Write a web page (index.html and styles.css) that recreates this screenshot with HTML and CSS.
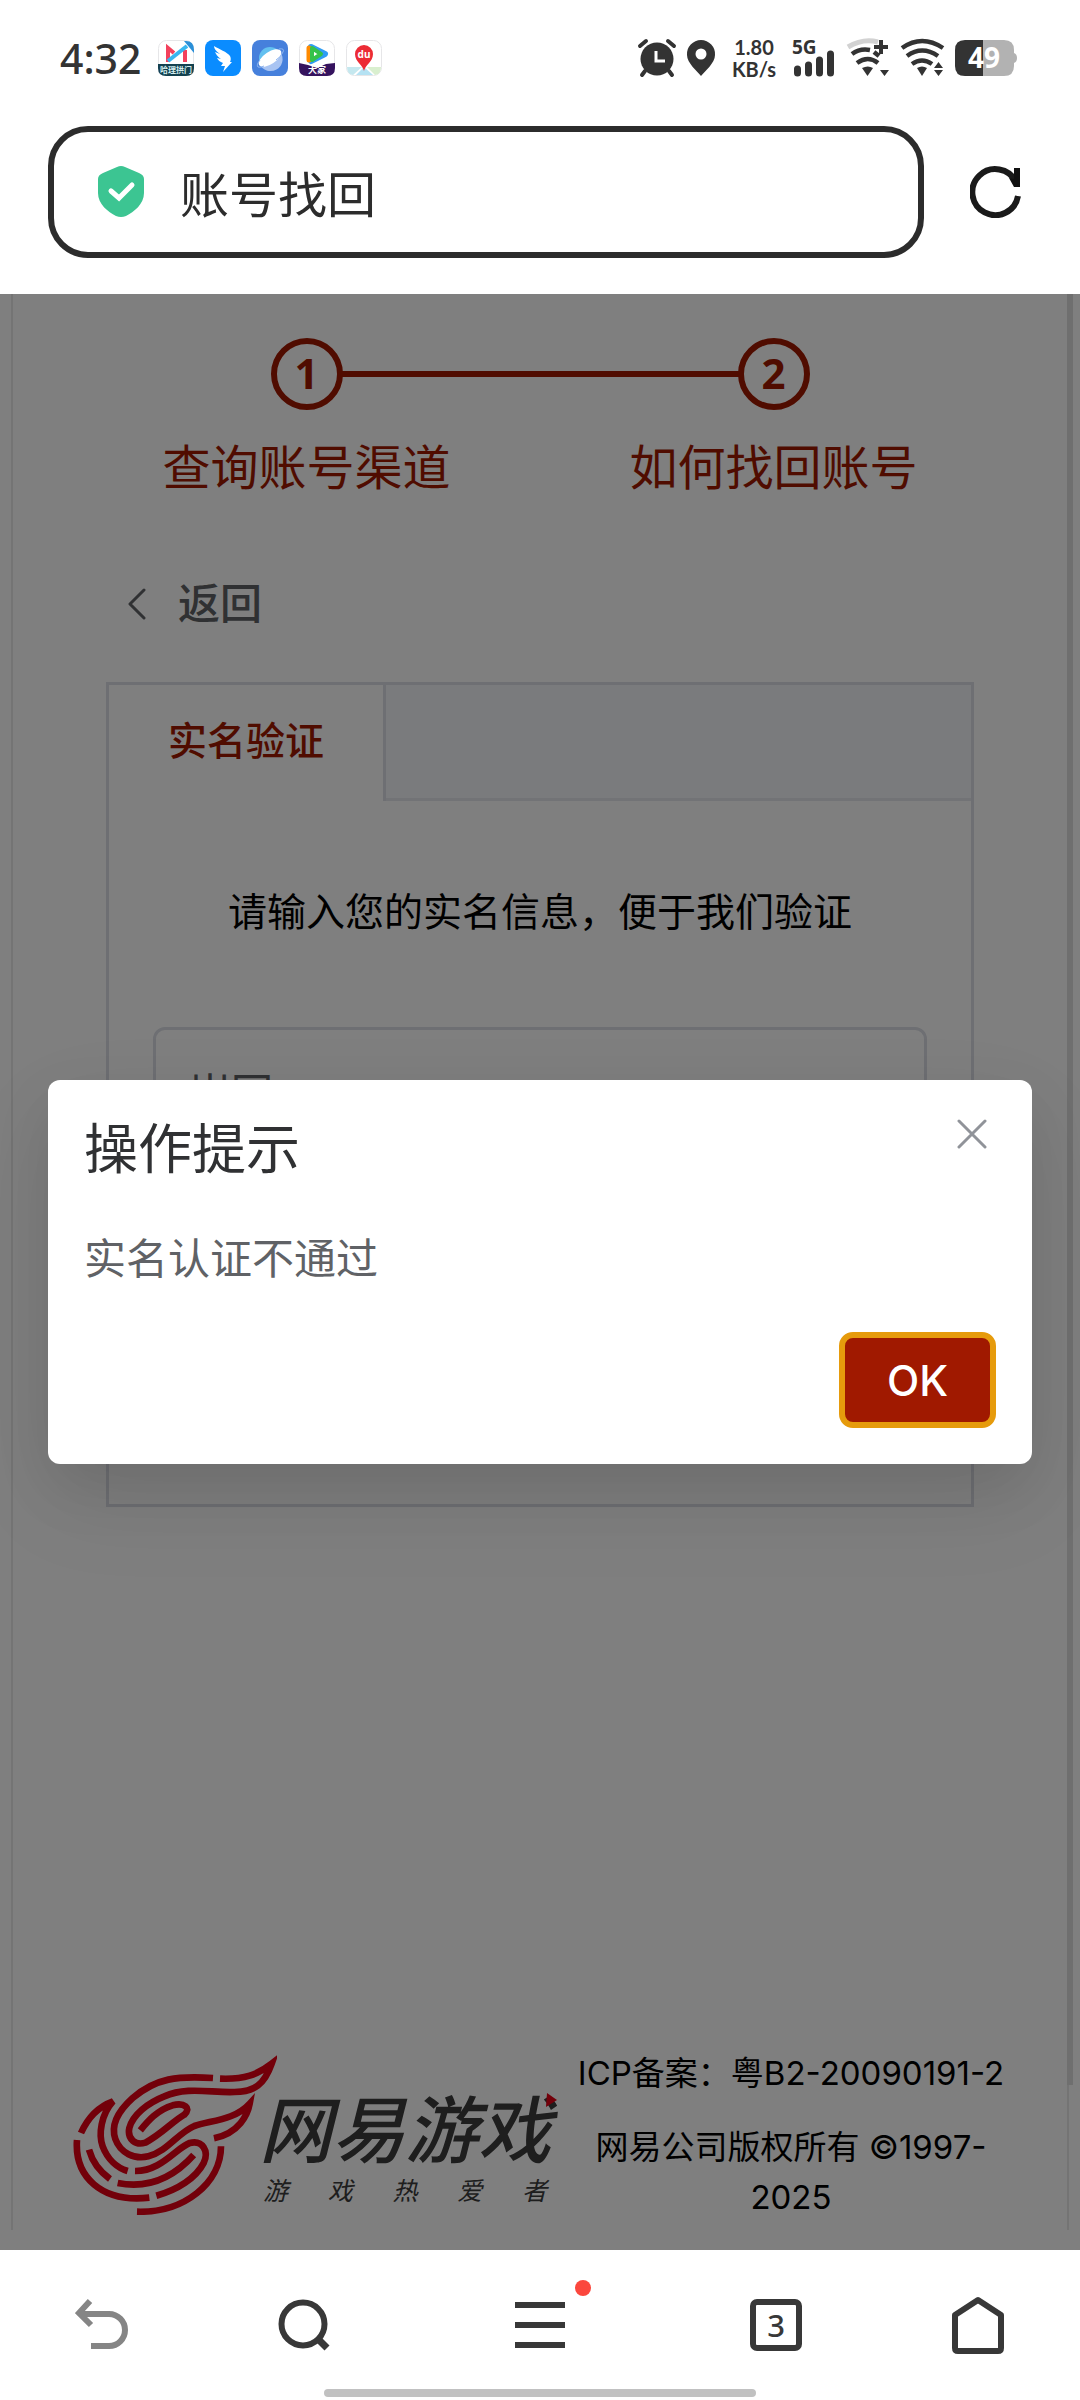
FILE: index.html
```html
<!DOCTYPE html>
<html lang="zh-CN">
<head>
<meta charset="utf-8">
<meta name="viewport" content="width=device-width, initial-scale=1">
<title>账号找回</title>
<link rel="stylesheet" href="styles.css">
</head>
<body>
<header class="browser-top">
  <div class="status">
    <time class="clock">4:32</time>
    <div class="apps">
      <svg viewBox="0 0 36 36"><rect x=".5" y=".5" width="35" height="35" rx="8" fill="#fff" stroke="#e6e6e8"/><path d="M26 1h2q8 0 8 9v3z" fill="#2a8fd8"/><path d="M10 22V8l6 5M27 22V10" fill="none" stroke="#f2415c" stroke-width="4"/><path d="M10 21L29 6" stroke="#38b6f0" stroke-width="4"/><path d="M0 24h36v4q0 8-8 8H8q-8 0-8-8z" fill="#14414f"/><text x="18" y="33" font-size="8" font-weight="700" text-anchor="middle" fill="#d5eef0">哈理拱门</text></svg>
      <svg viewBox="0 0 36 36"><rect width="36" height="36" rx="8" fill="#0a8cff"/><path d="M9 6c5 3 13 6 16 10 1 2 1 4 0 6h2l-9 10 2-6h-4l2-3c-3-1-5-3-6-5l4 1c-4-3-5-5-6-7l5 2C11 11 9 9 9 6z" fill="#fff"/></svg>
      <svg viewBox="0 0 36 36"><rect width="36" height="36" rx="8" fill="#4680dc"/><circle cx="18" cy="18" r="11" fill="#63c0f0"/><path d="M8 25L29 13a12 12 0 0 1-21 12z" fill="#a9c4f2"/><ellipse cx="18" cy="18" rx="13" ry="6" transform="rotate(-34 18 18)" fill="#fff"/><path d="M27 9q6-1 4 3-2 5-7 8M8 20q-4 5-2 7 2 1 6-1" fill="none" stroke="#8fb6f0"/></svg>
      <svg viewBox="0 0 36 36"><rect x=".5" y=".5" width="35" height="35" rx="8" fill="#fff" stroke="#e6e6e8"/><path d="M12 7l14 7-14 7z" fill="#2f9df4" stroke="#2f9df4" stroke-width="6" stroke-linejoin="round"/><path d="M10 8v12" stroke="#ff8a00" stroke-width="5" stroke-linecap="round"/><path d="M13 8l9 6-9 6z" fill="#fff" stroke="#35c24a" stroke-width="4" stroke-linejoin="round"/><path d="M0 23l9 2 9 3 9-4 9-1v5q0 8-8 8H8q-8 0-8-8z" fill="#35135e"/><text x="18" y="33" font-size="9" font-weight="700" text-anchor="middle" fill="#fff">大家</text></svg>
      <svg viewBox="0 0 36 36"><rect x=".5" y=".5" width="35" height="35" rx="8" fill="#fff" stroke="#e6e6e8"/><path d="M1 27h15l-9 8q-6-1-6-8z" fill="#c5e8ef"/><path d="M35 27H21l8 8q6-1 6-8z" fill="#d9efcf"/><path d="M18 27l9 8H10z" fill="#b5e2f3"/><path d="M18 31c-1-6-9-9-9-17a9 9 0 0 1 18 0c0 8-8 11-9 17z" fill="#ec2b35"/><text x="18" y="18" font-size="10" font-weight="700" text-anchor="middle" fill="#fff">du</text></svg>
    </div>
    <div class="signals">
      <svg class="alarm" viewBox="0 0 38 38"><circle cx="19" cy="20" r="16.5" fill="#333"/><path d="M2 7l6-5M36 7l-6-5M7 32l-3 4M31 32l3 4" stroke="#333" stroke-width="4" stroke-linecap="round"/><path d="M18 12v10h9" fill="none" stroke="#fff" stroke-width="3"/></svg>
      <svg class="pin" viewBox="0 0 30 38"><path d="M15 1a14 14 0 0 1 14 15c0 8-10 16-14 21C11 32 1 24 1 16A14 14 0 0 1 15 1z" fill="#333"/><circle cx="15" cy="15" r="5.5" fill="#fff"/></svg>
      <div class="speed"><span>1.80</span><span>KB/s</span></div>
      <svg class="cell" viewBox="0 0 44 38"><text x="0" y="15" font-size="19" font-weight="700" fill="#333">5G</text><path d="M5.500 30v4M16.500 26v8M27.500 21v13M38.500 15v19" stroke="#333" stroke-width="7" stroke-linecap="round"/></svg>
      <svg class="wifi" viewBox="0 0 44 38"><path d="M2 8Q17-1 32 3" fill="none" stroke="#d2d2d2" stroke-width="5"/><path d="M6 15q8-6 18-4M28 13l5 4M11 24q11-8 21 0" fill="none" stroke="#333" stroke-width="4.500"/><path d="M16 29q6-3 11 0l-5.500 8zM34 31h9l-4.500 6z" fill="#333"/><path d="M28 8h14M35 1v14" stroke="#333" stroke-width="4"/></svg>
      <svg class="wifi" viewBox="0 0 44 38"><path d="M2 9q20-14 41 0M7 17q15-11 31 0M12 25q10-7 20 0" fill="none" stroke="#333" stroke-width="4.500"/><path d="M17 29q5-3 10 0l-5 8zM34 29h9l-4.500-6zM34 31h9l-4.500 6z" fill="#333"/></svg>
      <svg class="battery" viewBox="0 0 64 38"><path d="M29 1h21q10 0 10 10v3q3 1 3 5t-3 5v3q0 10-10 10H29z" fill="#b2b2b2"/><path d="M29 1H11Q1 1 1 11v16q0 10 10 10h18z" fill="#333"/><text x="30" y="29" font-size="28" font-weight="700" text-anchor="middle" fill="#fff">49</text></svg>
    </div>
  </div>
  <div class="address-row">
    <button class="address" type="button">
      <svg viewBox="0 0 46 52"><path d="M19 2q4-2 8 0l14 6q5 2 5 6v14c0 11-10 19-18 23q-5 2-10 0C10 47 0 39 0 28V14q0-4 5-6z" fill="#3cc592"/><path d="M13 26l8 7 13-13" fill="none" stroke="#fff" stroke-width="5" stroke-linecap="round"/></svg>
      <span>账号找回</span>
    </button>
    <button class="reload" type="button" aria-label="刷新"><svg viewBox="0 0 52 52"><path d="M46 16A23 23 0 1 0 48 30" fill="none" stroke="#1a1a1a" stroke-width="6"/><path d="M44 2h6v19h-6l-5-9 5 1z" fill="#111"/></svg></button>
  </div>
</header>

<main class="viewport">
  <div class="page">
    <ol class="steps">
      <li><span class="num">1</span><span class="label">查询账号渠道</span></li>
      <li><span class="num">2</span><span class="label">如何找回账号</span></li>
    </ol>
    <a class="back" href="#"><svg viewBox="0 0 18 32"><path d="M16 2L2 16l14 14" fill="none" stroke="#606266" stroke-width="3" stroke-linecap="round" stroke-linejoin="round"/></svg>返回</a>
    <section class="card">
      <div class="tabs" role="tablist"><button class="tab" type="button" role="tab" aria-selected="true">实名验证</button></div>
      <form class="form">
        <label class="hint" for="realname">请输入您的实名信息，便于我们验证</label>
        <input class="field" id="realname" type="text" value="岚回">
      </form>
    </section>
    <footer class="footer">
      <div class="brand">
        <svg class="flame" viewBox="36 36 612 480"><g fill="none" stroke="#e60014" stroke-width="20" stroke-linejoin="miter">
          <path d="M456 105C350 98 285 105 215 165C165 210 150 250 163 288C178 330 220 350 262 340C320 325 350 270 400 249C450 232 520 232 566 182C560 215 535 270 459 286"/>
          <path d="M477 107C550 110 590 95 632 62C610 125 580 147 520 147C450 150 380 130 310 160C260 180 215 215 205 255C198 290 225 308 253 299C300 275 335 235 370 215C392 195 370 178 335 187C290 200 260 235 238 262"/>
          <path d="M60 270C80 225 115 190 156 175C120 215 112 275 125 310C140 350 170 375 200 384"/>
          <path d="M222 384C300 385 345 315 386 300C425 290 445 325 428 360C405 405 350 440 286 458"/>
          <path d="M170 420C270 440 345 395 398 336M84 320C95 360 115 385 147 408M48 291C40 400 120 480 265 464M228 506C370 510 480 420 480 310"/>
        </g></svg>
        <div class="wordmark">
          <strong>网易游戏</strong>
          <svg class="spark" viewBox="0 0 12 14"><path d="M2 0l10 7-11 7z" fill="#e60014"/></svg>
          <div class="tagline"><span>游</span><span>戏</span><span>热</span><span>爱</span><span>者</span></div>
        </div>
      </div>
      <div class="legal"><p>ICP备案：粤B2-20090191-2</p><p>网易公司版权所有 ©1997-2025</p></div>
    </footer>
  </div>
  <div class="scrollbar"></div>
  <div class="overlay">
    <div class="dialog" role="dialog" aria-labelledby="dlg-title">
      <div class="dialog-head">
        <h2 id="dlg-title">操作提示</h2>
        <button class="close" type="button" aria-label="关闭"><svg viewBox="0 0 30 30"><path d="M2 2l26 26M28 2L2 28" stroke="#909399" stroke-width="3" stroke-linecap="round"/></svg></button>
      </div>
      <p>实名认证不通过</p>
      <button class="ok" type="button">OK</button>
    </div>
  </div>
</main>

<nav class="toolbar">
  <button type="button" aria-label="后退"><svg viewBox="0 0 54 54"><path d="M15 3L4 15l12 12M4 16h30a16 16 0 0 1 0 32H16" fill="none" stroke="#858585" stroke-width="6"/></svg></button>
  <button type="button" aria-label="搜索"><svg viewBox="0 0 54 54"><circle cx="26" cy="26" r="21.500" fill="none" stroke="#383838" stroke-width="6"/><path d="M41 41l9 9" stroke="#383838" stroke-width="7"/></svg></button>
  <button class="menu" type="button" aria-label="菜单"><svg viewBox="0 0 54 54"><path d="M2 7h50M2 27h50M2 47h50" stroke="#383838" stroke-width="6"/></svg><i class="dot"></i></button>
  <button type="button" aria-label="标签页"><span class="tabcount">3</span></button>
  <button type="button" aria-label="主页"><svg viewBox="0 0 54 60"><path d="M27 5L4 20v33q0 3 3 3h40q3 0 3-3V20z" fill="none" stroke="#383838" stroke-width="6" stroke-linejoin="round"/></svg></button>
  <div class="handle"></div>
</nav>
</body>
</html>
```
FILE: styles.css
```css
* { box-sizing: border-box; }
body {
  margin: 0;
  min-height: 100vh;
  display: flex;
  flex-direction: column;
  background: #fff;
  color: #000;
  font-family: Inter, "Noto Sans CJK SC", sans-serif;
}
button {
  border: 0;
  padding: 0;
  background: none;
  font: inherit;
  color: inherit;
}
svg { display: block; flex: none; }
h2, p, ol { margin: 0; padding: 0; font-weight: 400; }

/* Status bar and address bar */
.browser-top { padding: 0 58px 36px 48px; }
.status {
  display: flex;
  align-items: center;
  height: 116px;
  padding: 0 4px 0 12px;
  font-family: "Noto Sans", "Noto Sans CJK SC", sans-serif;
  color: #333;
}
.clock { font-size: 41px; font-weight: 500; width: 98px; }
.apps { display: flex; gap: 11px; }
.apps svg { width: 36px; height: 36px; }
.signals { display: flex; align-items: center; gap: 10px; margin-left: auto; }
.signals svg { height: 38px; overflow: visible; }
.alarm { width: 38px; }
.pin { width: 30px; }
.cell { width: 44px; }
.wifi { width: 44px; }
.battery { width: 64px; }
.speed {
  display: flex;
  flex-direction: column;
  align-items: center;
  width: 56px;
  font-family: Lato, sans-serif;
  font-size: 20px;
  line-height: 22px;
  font-weight: 700;
}
.address-row { display: flex; align-items: center; gap: 46px; margin-top: 10px; }
.address {
  flex: 1;
  display: flex;
  align-items: center;
  gap: 36px;
  height: 132px;
  padding: 0 44px 2px;
  border: 6px solid #2c2c2c;
  border-radius: 40px;
  font-size: 49px;
  font-weight: 400;
  color: #2c2c2c;
}
.address svg { width: 46px; height: 52px; }
.reload svg { width: 52px; height: 52px; }

/* Web page */
.viewport { position: relative; flex: 1; display: flex; flex-direction: column; }
.page {
  flex: 1;
  display: flex;
  flex-direction: column;
  margin: 0 11px 20px;
  border: solid #e8e8e8;
  border-width: 0 2px;
}
.steps { display: flex; margin: 44px 60px 0; list-style: none; color: #a01900; }
.steps li {
  position: relative;
  flex: 1;
  display: flex;
  flex-direction: column;
  align-items: center;
  gap: 22px;
}
.num {
  display: grid;
  place-items: center;
  width: 72px;
  height: 72px;
  padding-bottom: 2px;
  border: 6px solid;
  border-radius: 50%;
  font-size: 42px;
  line-height: 56px;
  font-weight: 700;
  font-family: "Noto Sans", sans-serif;
}
.steps li + li::before {
  content: "";
  position: absolute;
  top: 33px;
  right: calc(50% + 35px);
  width: calc(100% - 70px);
  height: 6px;
  background: #a01900;
}
.label { font-size: 48px; line-height: 72px; }
.back {
  display: flex;
  align-items: center;
  gap: 32px;
  margin: 70px 0 0 115px;
  align-self: flex-start;
  font-size: 42px;
  line-height: 60px;
  font-weight: 500;
  color: #606266;
  text-decoration: none;
}
.back svg { width: 18px; height: 32px; }
.card {
  min-height: 825px;
  margin: 48px 93px 0;
  border: 3px solid #dcdfe6;
}
.tabs { display: flex; background: #f5f7fa; border-bottom: 3px solid #e4e7ed; }
.tab {
  height: 116px;
  margin-bottom: -3px;
  padding: 0 59px 10px;
  background: #fff;
  border-right: 3px solid #dcdfe6;
  font-size: 39px;
  font-weight: 500;
  color: #a01900;
}
.form { display: flex; flex-direction: column; gap: 85px; padding: 81px 44px; }
.hint { font-size: 39px; line-height: 60px; text-align: center; }
.field {
  width: 100%;
  height: 126px;
  padding: 0 33px;
  border: 3px solid #dcdfe6;
  border-radius: 12px;
  background: #fff;
  font: inherit;
  font-size: 42px;
  color: #606266;
}

/* Page footer */
.footer {
  display: flex;
  align-items: flex-start;
  margin-top: auto;
  padding: 0 36px 8px 60px;
}
.brand { display: flex; flex: none; width: 484px; margin-top: 7px; }
.flame { width: 204px; height: 160px; }
.wordmark { position: relative; flex: 1; margin-left: -18px; padding-top: 36px; color: #3c3c3c; }
.wordmark strong { display: block; font-size: 73px; line-height: 80px; font-style: italic; font-weight: 500; }
.spark { position: absolute; top: 38px; right: 0; width: 12px; height: 14px; }
.tagline {
  display: flex;
  justify-content: space-between;
  padding: 5px 10px 0 4px;
  font-size: 25px;
  line-height: 30px;
  font-style: italic;
}
.legal { flex: 1; display: grid; gap: 24px; padding: 0 14px 0 8px; font-size: 33px; line-height: 50px; text-align: center; }
.scrollbar {
  position: absolute;
  top: 0;
  right: 7px;
  width: 6px;
  height: 1791px;
  background: #dedede;
}

/* Modal */
.overlay {
  position: absolute;
  inset: 0;
  display: flex;
  align-items: center;
  justify-content: center;
  padding: 48px;
  background: rgba(0, 0, 0, 0.5);
}
.dialog {
  flex: 1;
  display: flex;
  flex-direction: column;
  padding: 36px;
  border-radius: 12px;
  background: #fff;
  box-shadow: 0 36px 96px rgba(0, 0, 0, 0.08), 0 24px 60px rgba(0, 0, 0, 0.08);
}
.dialog-head { display: flex; justify-content: space-between; align-items: flex-start; }
.dialog h2 { font-size: 54px; line-height: 68px; color: #303133; }
.close { padding: 3px 9px; }
.close svg { width: 30px; height: 30px; }
.dialog p { margin-top: 44px; font-size: 42px; line-height: 62px; color: #606266; }
.ok {
  align-self: flex-end;
  width: 157px;
  height: 96px;
  margin-top: 42px;
  border: 6px solid #e69b0c;
  border-radius: 14px;
  background: #a01900;
  color: #fff;
  font-size: 42px;
  font-weight: 500;
}

/* Bottom toolbar */
.toolbar {
  position: relative;
  display: grid;
  grid-template-columns: 51fr 50fr 68fr 50fr 51fr;
  height: 150px;
  padding-top: 26px;
  background: #fff;
}
.toolbar button { display: grid; place-items: center; height: 98px; }
.toolbar svg { width: 54px; height: 54px; }
.toolbar button:last-of-type svg { height: 60px; }
.menu { position: relative; }
.dot {
  position: absolute;
  top: 4px;
  left: calc(50% + 35px);
  width: 16px;
  height: 16px;
  border-radius: 50%;
  background: #fb473d;
}
.tabcount {
  display: grid;
  place-items: center;
  width: 52px;
  height: 52px;
  border: 6px solid #383838;
  border-radius: 7px;
  font-family: "Noto Sans", sans-serif;
  font-size: 31px;
  line-height: 40px;
  font-weight: 500;
  color: #383838;
}
.handle {
  position: absolute;
  bottom: 3px;
  left: 30%;
  right: 30%;
  height: 8px;
  border-radius: 4px;
  background: #c1c1c1;
}
```
